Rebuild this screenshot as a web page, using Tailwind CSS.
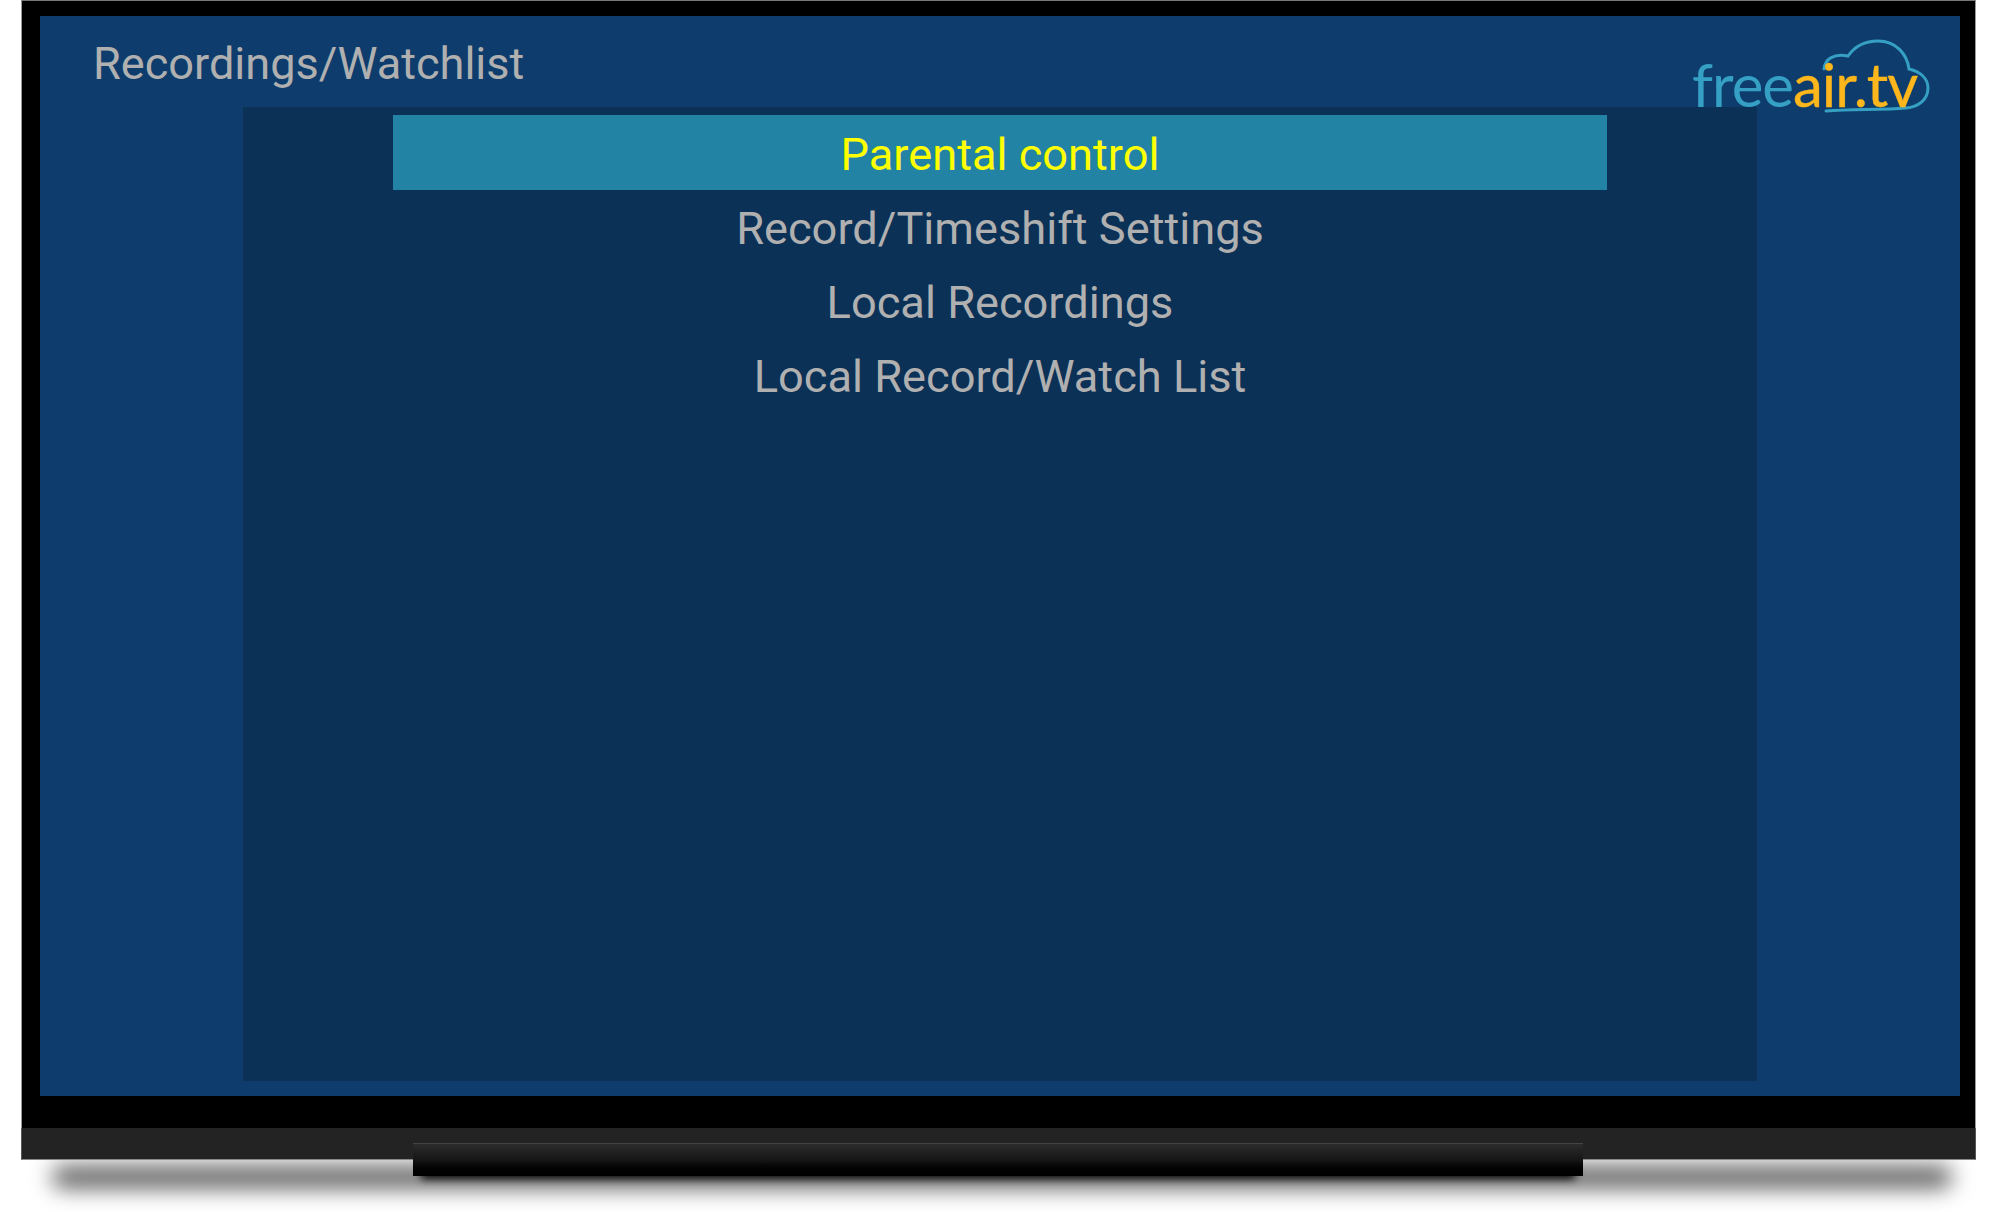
<!DOCTYPE html>
<html lang="en">
<head>
  <meta charset="UTF-8" />
  <title>Recordings/Watchlist</title>
  <script src="https://cdn.jsdelivr.net/npm/@tailwindcss/browser@4"></script>
</head>
<body class="bg-white w-[2005px] h-[1212px] overflow-hidden relative font-['Roboto',sans-serif]">
  <!-- shadow under the set -->
  <div class="absolute left-[52px] top-[1166px] w-[1900px] h-[22px] bg-[#5c5c5c] blur-[11px] rounded-[30px]"></div>

  <div class="relative ml-[21px] w-[1955px]">
    <!-- bezel -->
    <div class="h-[1128px] bg-black border-t border-x border-t-[#777] border-x-[#999] pl-[18px] pr-[15px] pt-[15px]">
      <div class="relative h-[1080px] bg-[#0e3d6d] flex flex-col items-center">
        <h1 class="absolute left-[53px] top-[14px] text-[45.1px] leading-[68px] font-normal text-[#b0b0b0]">Recordings/Watchlist</h1>

        <div class="absolute left-[1652px] top-[20px] w-[250px] h-[100px]">
          <svg class="absolute left-0 top-0" width="250" height="100" viewBox="0 0 250 100" fill="none">
            <path d="M132 33C133 23 142 17 156 20C163 10 172 5 186 5C204 5 215 18 217 33C229 36 236 43 236 52C236 64 226 71 214 72C190 74 160 73 134 75" stroke="#35a0c4" stroke-width="3" stroke-linecap="round"/>
          </svg>
          <div class="absolute left-0 top-[10px] font-['Lato',sans-serif] text-[60px] leading-[76px] tracking-[-1px] whitespace-nowrap">
            <span class="text-[#35a0c4]">free</span><span class="text-[#fdb71c] [-webkit-text-stroke:0.4px_#fdb71c]">air.tv</span>
          </div>
        </div>

        <div class="mt-[91px] w-[1514px] h-[974px] bg-[#0c3157] pt-2 flex flex-col items-center text-[45.2px] text-[#b0b0b0]">
          <div class="w-[1214px] h-[75px] bg-[#2283a5] text-[#ffff00] flex items-center justify-center pt-1">Parental control</div>
          <div class="h-[74px] flex items-center justify-center pt-1">Record/Timeshift Settings</div>
          <div class="h-[74px] flex items-center justify-center pt-1">Local Recordings</div>
          <div class="h-[74px] flex items-center justify-center pt-1">Local Record/Watch List</div>
        </div>
      </div>
    </div>
    <!-- lower bar -->
    <div class="h-[32px] bg-[#232323] border-b border-x border-b-[#888] border-x-[#555]"></div>
    <!-- stand -->
    <div class="absolute left-[400px] top-[1165px] w-[1154px] h-[14px] bg-black blur-[4px]"></div>
    <div class="absolute left-[392px] top-[1143px] w-[1170px] h-[33px] border-t border-t-[#444] bg-gradient-to-b from-[#2c2c2c] via-[#161616] to-[#000]"></div>
  </div>
</body>
</html>
